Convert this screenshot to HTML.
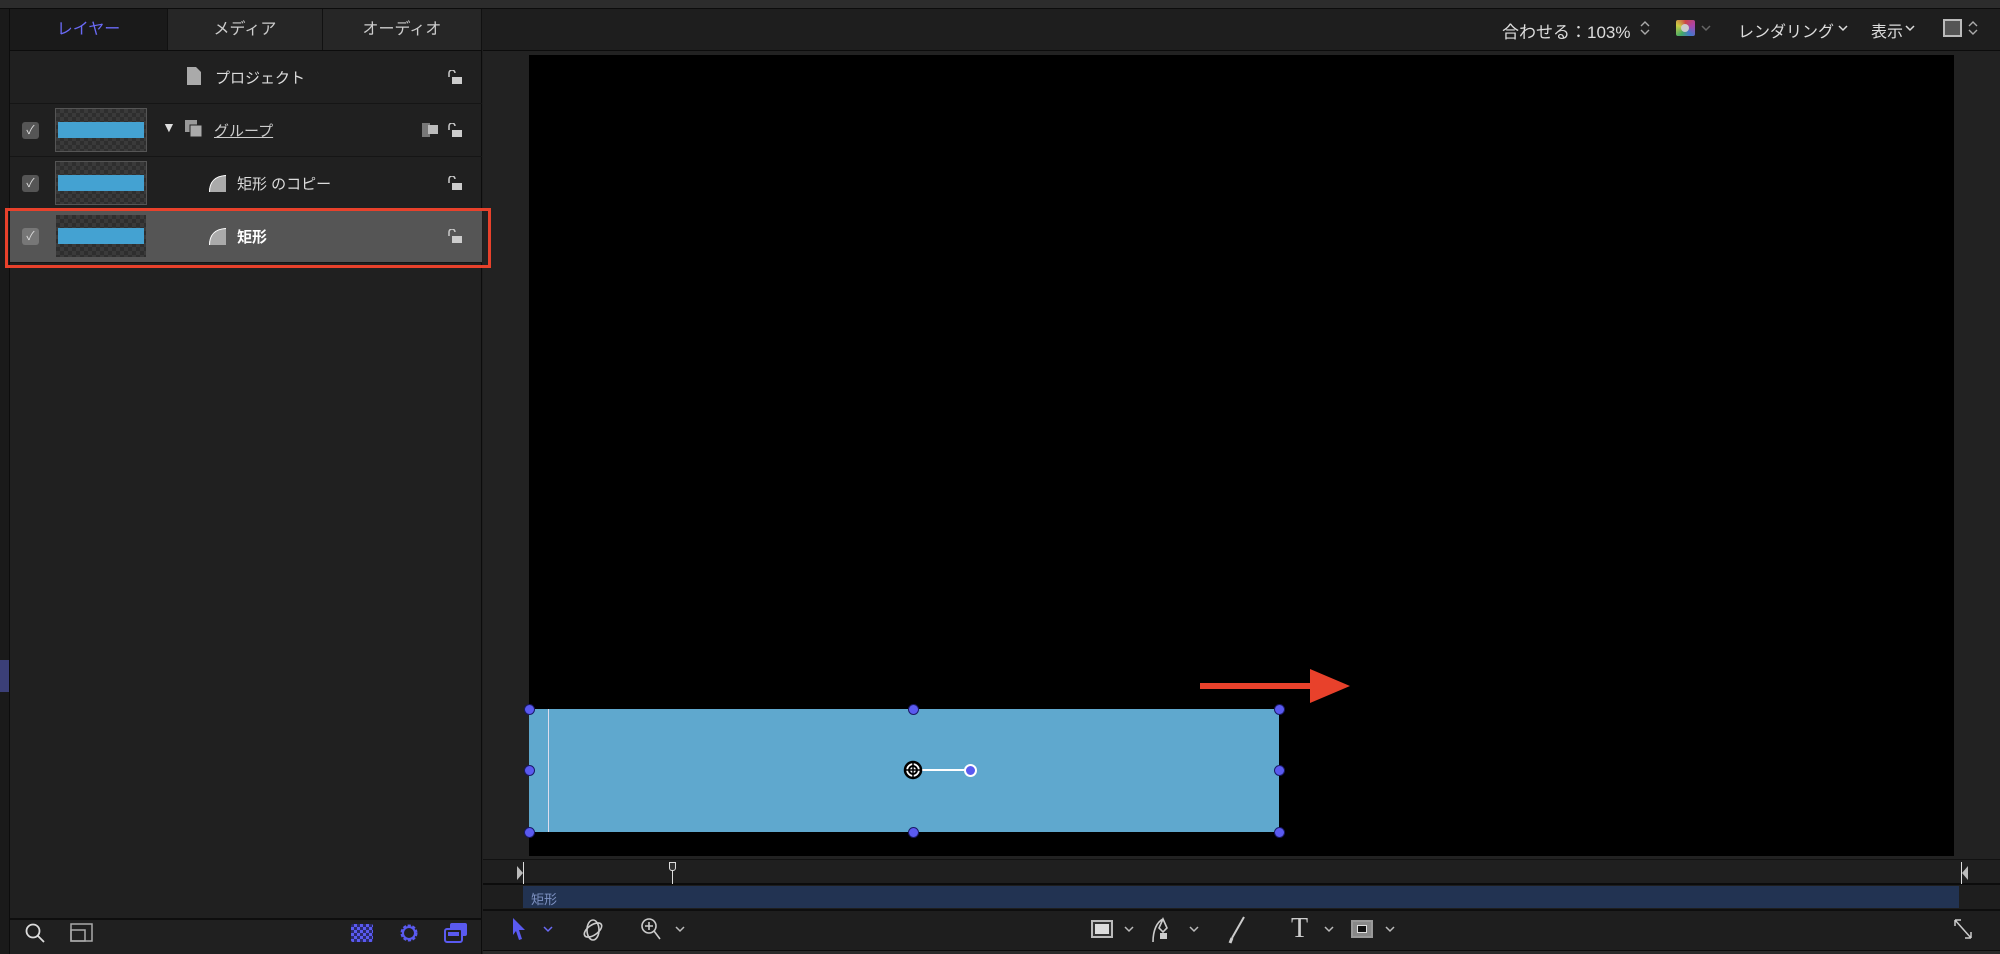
<!DOCTYPE html>
<html><head><meta charset="utf-8"><style>
*{margin:0;padding:0;box-sizing:border-box}
body{width:2000px;height:954px;background:#1e1e1e;position:relative;overflow:hidden;font-family:"Liberation Sans","Noto Sans CJK JP",sans-serif;color:#ddd}
.a{position:absolute}
.tab{position:absolute;top:9px;height:42px;line-height:42px;text-align:center;font-size:16px;color:#ccc;background:#262626;border-right:1px solid #111}
.row{position:absolute;left:10px;width:472px;height:53px;border-bottom:1px solid #151515;font-size:15px}
.chk{position:absolute;left:12px;top:18px;width:17px;height:17px;border-radius:3px;background:#555;color:#ddd;font-size:12px;text-align:center;line-height:17px}
.th{position:absolute;left:45px;top:4px;width:92px;height:44px;border:1px solid #555;background:repeating-conic-gradient(#3a3a3a 0 25%,#2e2e2e 0 50%) 0 0/8px 8px}
.th i{position:absolute;left:2px;right:2px;top:13px;height:16px;background:#44a2d2}
.lock{position:absolute;right:20px;top:19px;width:14px;height:14px}
.h{position:absolute;width:11px;height:11px;border-radius:50%;background:#5a5af0;border:1.5px solid #1a1a66;margin:-5px 0 0 -5px}
.cv{position:absolute;width:10px;height:7px}
</style></head><body>
<div class="a" style="left:0;top:0;width:2000px;height:9px;background:#2c2c2c;border-bottom:1px solid #0c0c0c"></div>
<div class="a" style="left:0;top:9px;width:10px;height:945px;background:#1a1a1a;border-right:1px solid #0c0c0c"></div>
<div class="a" style="left:0;top:660px;width:9px;height:32px;background:#3b3f78"></div>
<div class="a" style="left:10px;top:9px;width:472px;height:945px;background:#202020;border-right:1px solid #0c0c0c"></div>
<div class="tab" style="left:10px;width:158px;color:#6a6af5;background:#1a1a1a">レイヤー</div>
<div class="tab" style="left:168px;width:155px">メディア</div>
<div class="tab" style="left:323px;width:159px">オーディオ</div>
<div class="a" style="left:10px;top:50px;width:472px;height:1px;background:#0c0c0c"></div>

<div class="row" style="top:51px"><svg class="a" style="left:177px;top:16px" width="14" height="18"><path d="M0 0h9l5 5v13H0z" fill="#aaa"/></svg><span class="a" style="left:205px;top:16px">プロジェクト</span><svg class="lock" viewBox="0 0 14 14"><path d="M1 7V3a3 3 0 0 1 6 0" stroke="#ccc" stroke-width="1.5" fill="none"/><rect x="4" y="7" width="10" height="7" fill="#ccc"/></svg></div>
<div class="row" style="top:104px"><div class="chk">✓</div><div class="th"><i></i></div><span class="a" style="left:152px;top:15px;font-size:14px;color:#ddd">▼</span><svg class="a" style="left:175px;top:16px" width="18" height="18"><rect x="0" y="0" width="12" height="12" fill="#999"/><rect x="5" y="5" width="12" height="12" fill="#aaa" stroke="#222"/></svg><span class="a" style="left:204px;top:16px;text-decoration:underline;color:#ccc">グループ</span><svg class="a" style="right:42px;top:19px" width="18" height="14"><rect width="8" height="14" fill="#777"/><rect x="6" y="2" width="10" height="9" fill="#bbb"/></svg><svg class="lock" viewBox="0 0 14 14"><path d="M1 7V3a3 3 0 0 1 6 0" stroke="#ccc" stroke-width="1.5" fill="none"/><rect x="4" y="7" width="10" height="7" fill="#ccc"/></svg></div>
<div class="row" style="top:157px"><div class="chk">✓</div><div class="th"><i></i></div><svg class="a" style="left:199px;top:18px" width="17" height="17"><path d="M0 17C0 7 6 1 17 0v17z" fill="#aaa"/><path d="M0.5 17C0.5 7 6 1 17 0.5" stroke="#fff" fill="none"/></svg><span class="a" style="left:227px;top:16px">矩形 のコピー</span><svg class="lock" viewBox="0 0 14 14"><path d="M1 7V3a3 3 0 0 1 6 0" stroke="#ccc" stroke-width="1.5" fill="none"/><rect x="4" y="7" width="10" height="7" fill="#ccc"/></svg></div>
<div class="row" style="top:210px;background:#555"><div class="chk" style="background:#777">✓</div><div class="th"><i></i></div><svg class="a" style="left:199px;top:18px" width="17" height="17"><path d="M0 17C0 7 6 1 17 0v17z" fill="#aaa"/><path d="M0.5 17C0.5 7 6 1 17 0.5" stroke="#fff" fill="none"/></svg><span class="a" style="left:227px;top:16px;color:#fff;font-weight:bold">矩形</span><svg class="lock" viewBox="0 0 14 14"><path d="M1 7V3a3 3 0 0 1 6 0" stroke="#ccc" stroke-width="1.5" fill="none"/><rect x="4" y="7" width="10" height="7" fill="#ccc"/></svg></div>

<div class="a" style="left:10px;top:918px;width:472px;height:2px;background:#0e0e0e"></div>
<svg class="a" style="left:24px;top:922px" width="22" height="22"><circle cx="9" cy="9" r="6.5" stroke="#ddd" stroke-width="1.8" fill="none"/><path d="M14 14l6 6" stroke="#ddd" stroke-width="1.8"/></svg>
<svg class="a" style="left:70px;top:923px" width="24" height="20"><rect x="1" y="1" width="21" height="17" stroke="#aaa" stroke-width="1.5" fill="none"/><rect x="1" y="7" width="14" height="11" stroke="#aaa" stroke-width="1.5" fill="none"/></svg>
<div class="a" style="left:351px;top:924px;width:22px;height:18px;border-radius:2px;background:repeating-conic-gradient(#5a5af0 0 25%,#2a2a6a 0 50%) 0 0/6px 6px"></div>
<svg class="a" style="left:398px;top:922px" width="22" height="22"><circle cx="11" cy="11" r="7" stroke="#5a5af0" stroke-width="3" fill="none" stroke-dasharray="3 1.5"/><circle cx="11" cy="11" r="6" stroke="#5a5af0" stroke-width="2" fill="none"/></svg>
<svg class="a" style="left:444px;top:922px" width="24" height="22"><rect x="6" y="1" width="17" height="13" rx="2" fill="#5a5af0"/><rect x="1" y="7" width="17" height="13" rx="2" fill="#202020" stroke="#5a5af0" stroke-width="2"/><rect x="4" y="10" width="11" height="4" fill="#5a5af0"/></svg>

<div class="a" style="left:483px;top:10px;width:1517px;height:41px;background:#1e1e1e;border-bottom:1px solid #0c0c0c"></div>
<div class="a" style="left:1502px;top:18px;font-size:17px;color:#ddd">合わせる：103%</div>
<svg class="a" style="left:1640px;top:20px" width="10" height="16"><path d="M1 6l4-4 4 4M1 10l4 4 4-4" stroke="#aaa" stroke-width="1.4" fill="none"/></svg>
<div class="a" style="left:1676px;top:20px;width:19px;height:16px;border-radius:2px;background:conic-gradient(#c44,#a4a,#47c,#4a6,#cc4,#c44)"></div>
<div class="a" style="left:1681px;top:24px;width:8px;height:8px;border-radius:50%;background:#ccc"></div>
<svg class="cv" style="left:1701px;top:25px"><path d="M1 1l4 4 4-4" stroke="#666" stroke-width="1.5" fill="none"/></svg>
<div class="a" style="left:1738px;top:18px;font-size:16px;color:#ddd">レンダリング</div>
<svg class="cv" style="left:1838px;top:25px"><path d="M1 1l4 4 4-4" stroke="#ddd" stroke-width="1.5" fill="none"/></svg>
<div class="a" style="left:1871px;top:18px;font-size:16px;color:#ddd">表示</div>
<svg class="cv" style="left:1905px;top:25px"><path d="M1 1l4 4 4-4" stroke="#ddd" stroke-width="1.5" fill="none"/></svg>
<div class="a" style="left:1943px;top:19px;width:19px;height:18px;border:2px solid #bbb;background:#555"></div>
<svg class="a" style="left:1968px;top:20px" width="10" height="16"><path d="M1 6l4-4 4 4M1 10l4 4 4-4" stroke="#aaa" stroke-width="1.4" fill="none"/></svg>

<div class="a" style="left:483px;top:51px;width:1517px;height:808px;background:#222"></div>
<div class="a" style="left:529px;top:55px;width:1425px;height:801px;background:#000"></div>
<div class="a" style="left:529px;top:709px;width:750px;height:123px;background:#5fa8ce"></div>
<div class="a" style="left:548px;top:709px;width:1px;height:123px;background:#dde"></div>
<div class="a" style="left:913px;top:769px;width:57px;height:2px;background:#fff"></div>
<div class="h" style="left:529px;top:709px"></div><div class="h" style="left:913px;top:709px"></div><div class="h" style="left:1279px;top:709px"></div>
<div class="h" style="left:529px;top:770px"></div><div class="h" style="left:1279px;top:770px"></div>
<div class="h" style="left:529px;top:832px"></div><div class="h" style="left:913px;top:832px"></div><div class="h" style="left:1279px;top:832px"></div>
<div class="h" style="left:970px;top:770px;width:13px;height:13px;margin:-6px 0 0 -6px;border:2px solid #fff;background:#5a5af0"></div>
<svg class="a" style="left:902px;top:759px" width="22" height="22"><circle cx="11" cy="11" r="8" stroke="#000" stroke-width="2.5" fill="#fff"/><circle cx="11" cy="11" r="4" stroke="#000" stroke-width="2" fill="none"/><path d="M11 2v18M2 11h18" stroke="#000" stroke-width="1.5"/></svg>
<svg class="a" style="left:1200px;top:669px" width="152" height="34"><path d="M0 14h110v-14l40 17-40 17v-14H0z" fill="#e8412b"/></svg>

<div class="a" style="left:5px;top:208px;width:486px;height:60px;border:3px solid #e8412b;z-index:5"></div>

<div class="a" style="left:483px;top:859px;width:1517px;height:26px;background:#1f1f1f;border-top:1px solid #111;border-bottom:2px solid #0c0c0c"></div>
<div class="a" style="left:523px;top:862px;width:1px;height:22px;background:#ddd"></div>
<div class="a" style="left:517px;top:866px;width:0;height:0;border-left:6px solid #bbb;border-top:7px solid transparent;border-bottom:7px solid transparent"></div>
<div class="a" style="left:1961px;top:862px;width:1px;height:22px;background:#ddd"></div>
<div class="a" style="left:1962px;top:866px;width:0;height:0;border-right:6px solid #bbb;border-top:7px solid transparent;border-bottom:7px solid transparent"></div>
<div class="a" style="left:672px;top:862px;width:1px;height:22px;background:#ddd"></div>
<div class="a" style="left:669px;top:862px;width:7px;height:9px;border:1.5px solid #ddd;border-radius:0 0 3px 3px;background:#333"></div>
<div class="a" style="left:523px;top:886px;width:1436px;height:22px;background:#223352;font-size:13px;color:#7f93c4;padding:3px 8px">矩形</div>
<div class="a" style="left:483px;top:909px;width:1517px;height:2px;background:#0e0e0e"></div>
<svg class="a" style="left:512px;top:918px" width="14" height="22"><path d="M1 0l12 12h-6l3 9-3 1-3-9-3 4z" fill="#5a5af0"/></svg>
<svg class="cv" style="left:543px;top:926px"><path d="M1 1l4 4 4-4" stroke="#6a6af5" stroke-width="1.5" fill="none"/></svg>
<svg class="a" style="left:582px;top:917px" width="22" height="26"><ellipse cx="11" cy="13" rx="6" ry="10" stroke="#ccc" stroke-width="1.6" fill="none"/><ellipse cx="11" cy="13" rx="10" ry="5" transform="rotate(-35 11 13)" stroke="#ccc" stroke-width="1.6" fill="none"/></svg>
<svg class="a" style="left:640px;top:917px" width="22" height="26"><circle cx="9" cy="9" r="7" stroke="#ccc" stroke-width="1.6" fill="none"/><path d="M9 5v8M5 9h8M14 14l6 8" stroke="#ccc" stroke-width="1.6"/></svg>
<svg class="cv" style="left:675px;top:926px"><path d="M1 1l4 4 4-4" stroke="#bbb" stroke-width="1.5" fill="none"/></svg>
<div class="a" style="left:1091px;top:920px;width:22px;height:18px;border:2px solid #bbb;background:#ddd;box-shadow:inset 0 0 0 2px #333"></div>
<svg class="cv" style="left:1124px;top:926px"><path d="M1 1l4 4 4-4" stroke="#bbb" stroke-width="1.5" fill="none"/></svg>
<svg class="a" style="left:1151px;top:916px" width="24" height="28"><path d="M2 26C2 14 6 6 12 3M12 3l4 9-4 4-4-4z" stroke="#ccc" stroke-width="1.6" fill="none"/><rect x="9" y="17" width="7" height="6" fill="#ccc"/></svg>
<svg class="cv" style="left:1189px;top:926px"><path d="M1 1l4 4 4-4" stroke="#bbb" stroke-width="1.5" fill="none"/></svg>
<svg class="a" style="left:1228px;top:916px" width="18" height="28"><path d="M16 1L4 22" stroke="#ccc" stroke-width="2"/><path d="M4 22l-2 5" stroke="#ccc" stroke-width="3"/></svg>
<div class="a" style="left:1291px;top:913px;font-size:28px;font-family:'Liberation Serif',serif;color:#ccc">T</div>
<svg class="cv" style="left:1324px;top:926px"><path d="M1 1l4 4 4-4" stroke="#bbb" stroke-width="1.5" fill="none"/></svg>
<div class="a" style="left:1351px;top:920px;width:22px;height:18px;border:2px solid #999;background:#888"><div style="margin:3px 4px;height:8px;background:#111;border:1px solid #ddd"></div></div>
<svg class="cv" style="left:1385px;top:926px"><path d="M1 1l4 4 4-4" stroke="#bbb" stroke-width="1.5" fill="none"/></svg>
<svg class="a" style="left:1953px;top:918px" width="20" height="22"><path d="M2 2l16 18M2 2v6M2 2h6M18 20v-6M18 20h-6" stroke="#ccc" stroke-width="1.5" fill="none"/></svg>
<div class="a" style="left:483px;top:950px;width:1517px;height:4px;background:#2a2a2a;border-top:1px solid #0c0c0c"></div>
</body></html>
